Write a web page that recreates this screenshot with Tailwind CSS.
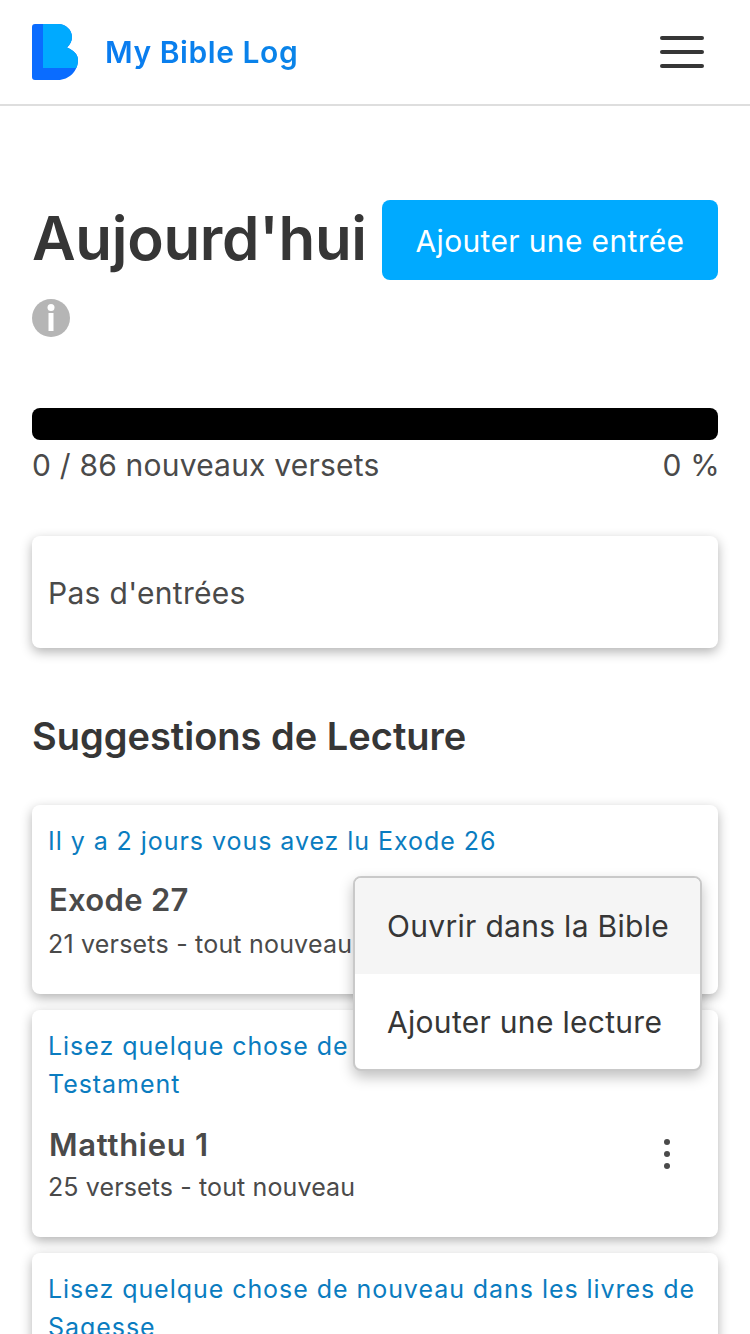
<!DOCTYPE html>
<html lang="fr">
<head>
  <meta charset="UTF-8">
  <title>My Bible Log</title>
  <script src="https://cdn.jsdelivr.net/npm/@tailwindcss/browser@4"></script>
</head>
<body class="bg-white text-[#363636] font-['Inter','Noto_Sans',sans-serif] h-[1334px] overflow-hidden">
  <header class="h-[106px] border-b-2 border-[#dedede] pl-8 pr-[46px] flex items-center justify-between">
    <a class="flex items-center gap-[27px]">
      <svg class="w-[46px] h-[56px]" viewBox="0 0 46 56">
        <path fill="#0a6cff" d="M3 0H26C34 0 40 6 40 13C40 17 38 21 35 23.500C41 26 46 30 46 36C46 47 37 56 26 56H3C1 56 0 55 0 53V3C0 1 1 0 3 0Z"/>
        <path fill="#00aaff" d="M11 0H26C34 0 40 6 40 13C40 17 38 21 35 23.500C41 26 46 30 46 36C46 38.900 45.400 41.600 44.300 44H11Z"/>
      </svg>
      <span class="text-[30px] font-semibold tracking-[0.55px] bg-gradient-to-r from-[#0a7cf0] to-[#0a84e8] bg-clip-text text-transparent">My Bible Log</span>
    </a>
    <button class="flex flex-col gap-[10px]">
      <span class="block w-11 h-1 rounded-full bg-[#363636]"></span>
      <span class="block w-11 h-1 rounded-full bg-[#363636]"></span>
      <span class="block w-11 h-1 rounded-full bg-[#363636]"></span>
    </button>
  </header>

  <main class="px-8">
    <div class="mt-[94px] flex justify-between items-center">
      <h1 class="text-[60px] leading-[76px] mb-1 font-semibold tracking-[-0.3px]">Aujourd'hui</h1>
      <button class="w-[336px] h-20 pt-[2px] rounded-lg bg-[#00aaff] text-white text-[30px] tracking-[0.35px]">Ajouter une entrée</button>
    </div>
    <svg class="w-[38px] h-[38px] mt-[19px]" viewBox="0 0 38 38">
      <circle cx="19" cy="19" r="19" fill="#b5b5b5"/>
      <circle cx="19" cy="8.500" r="3.500" fill="#fff"/>
      <rect x="16.500" y="14" width="5" height="18" fill="#fff"/>
    </svg>

    <div class="mt-[71px] h-8 rounded-lg bg-black"></div>
    <div class="flex justify-between text-[30px] leading-[50px] tracking-[0.2px] text-[#4a4a4a]">
      <span>0 / 86 nouveaux versets</span>
      <span class="-mr-[2px]">0 %</span>
    </div>

    <div class="mt-[46px] h-28 pl-4 pr-[17px] pt-[2px] flex items-center rounded-lg bg-white text-[30px] tracking-[0.3px] text-[#4a4a4a] shadow-[0_4px_12px_rgba(0,0,0,0.3)]">Pas d'entrées</div>

    <h2 class="mt-[61px] text-[38px] leading-[54px] font-semibold">Suggestions de Lecture</h2>

    <div class="mt-[42px] flex flex-col gap-4">
      <div class="relative h-[189px] pl-4 pr-[17px] pt-[17px] rounded-lg bg-white shadow-[0_4px_12px_rgba(0,0,0,0.3)]">
        <p class="text-[25px] leading-[38px] tracking-[0.95px] text-[#0a7cc0]">Il y a 2 jours vous avez lu Exode 26</p>
        <h3 class="mt-5 pl-[1px] text-[31px] leading-[40px] tracking-[0.3px] font-semibold text-[#4a4a4a]">Exode 27</h3>
        <p class="mt-[5px] text-[25px] leading-[38px] tracking-[0.2px] text-[#4a4a4a]">21 versets - tout nouveau</p>
        <div class="absolute z-10 top-[71px] right-4 w-[349px] h-[195px] rounded-lg border-2 border-[#c9c9c9] bg-white overflow-hidden shadow-[0_6px_14px_rgba(0,0,0,0.25)] text-[30px] tracking-[0.3px]">
          <div class="h-[96px] pl-8 flex items-center bg-[#f5f5f5]">Ouvrir dans la Bible</div>
          <div class="h-[96px] pl-8 flex items-center">Ajouter une lecture</div>
        </div>
      </div>

      <div class="relative h-[227px] pl-4 pr-[17px] pt-[17px] rounded-lg bg-white shadow-[0_4px_12px_rgba(0,0,0,0.3)]">
        <p class="text-[25px] leading-[38px] tracking-[0.95px] text-[#0a7cc0]">Lisez quelque chose de nouveau dans le Nouveau Testament</p>
        <h3 class="mt-[22px] pl-[1px] text-[31px] leading-[40px] tracking-[0.7px] font-semibold text-[#4a4a4a]">Matthieu 1</h3>
        <p class="mt-[3px] text-[25px] leading-[38px] tracking-[0.12px] text-[#4a4a4a]">25 versets - tout nouveau</p>
        <div class="absolute right-[48px] top-[129px] flex flex-col gap-[6px]">
          <span class="block w-[6px] h-[6px] rounded-full bg-[#4a4a4a]"></span>
          <span class="block w-[6px] h-[6px] rounded-full bg-[#4a4a4a]"></span>
          <span class="block w-[6px] h-[6px] rounded-full bg-[#4a4a4a]"></span>
        </div>
      </div>

      <div class="h-[227px] pl-4 pr-[17px] pt-[17px] rounded-lg bg-white shadow-[0_4px_12px_rgba(0,0,0,0.3)]">
        <p class="text-[25px] leading-[38px] tracking-[0.95px] text-[#0a7cc0]">Lisez quelque chose de nouveau dans les livres de Sagesse</p>
      </div>
    </div>
  </main>
</body>
</html>
